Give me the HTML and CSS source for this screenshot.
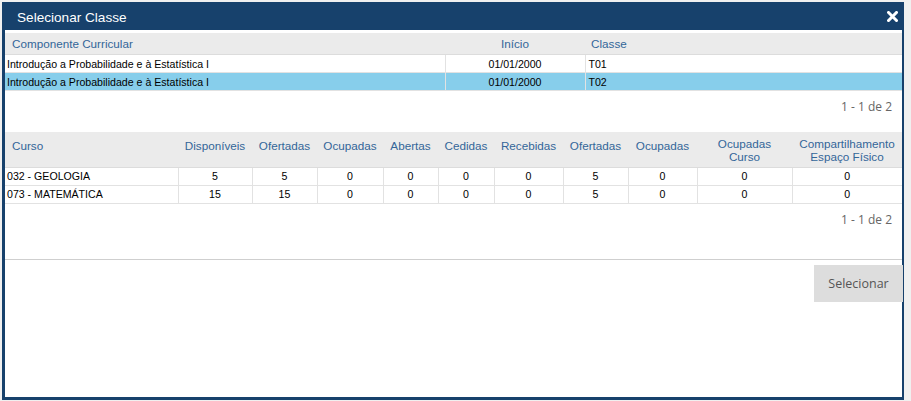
FILE: index.html
```html
<!DOCTYPE html>
<html lang="pt">
<head>
<meta charset="utf-8">
<title>Selecionar Classe</title>
<link rel="stylesheet" href="styles.css">
</head>
<body>
<div class="dialog">
  <div class="titlebar">
    <span class="title">Selecionar Classe</span>
    <span class="close" aria-label="Fechar">
      <svg width="11" height="11" viewBox="0 0 11 11"><path d="M1.5 1.5 L9.5 9.5 M9.5 1.5 L1.5 9.5" stroke="#fff" stroke-width="3" stroke-linecap="square"/></svg>
    </span>
  </div>
  <div class="content">
    <table class="grid grid-classes">
      <colgroup>
        <col class="c-comp"><col class="c-inicio"><col class="c-classe">
      </colgroup>
      <thead>
        <tr><th class="left">Componente Curricular</th><th>Início</th><th class="left">Classe</th></tr>
      </thead>
      <tbody>
        <tr><td class="left">Introdução a Probabilidade e à Estatística I</td><td>01/01/2000</td><td class="left t">T01</td></tr>
        <tr class="selected"><td class="left">Introdução a Probabilidade e à Estatística I</td><td>01/01/2000</td><td class="left t">T02</td></tr>
      </tbody>
    </table>
    <div class="pager">1 - 1 de 2</div>

    <table class="grid grid-cursos">
      <colgroup>
        <col class="k1"><col class="k2"><col class="k3"><col class="k4"><col class="k5"><col class="k6"><col class="k7"><col class="k8"><col class="k9"><col class="k10"><col class="k11">
      </colgroup>
      <thead>
        <tr>
          <th class="left">Curso</th><th>Disponíveis</th><th>Ofertadas</th><th>Ocupadas</th><th>Abertas</th><th>Cedidas</th><th>Recebidas</th><th>Ofertadas</th><th>Ocupadas</th><th>Ocupadas<br>Curso</th><th>Compartilhamento<br>Espaço Físico</th>
        </tr>
      </thead>
      <tbody>
        <tr><td class="left">032 - GEOLOGIA</td><td>5</td><td>5</td><td>0</td><td>0</td><td>0</td><td>0</td><td>5</td><td>0</td><td>0</td><td>0</td></tr>
        <tr><td class="left">073 - MATEMÁTICA</td><td>15</td><td>15</td><td>0</td><td>0</td><td>0</td><td>0</td><td>5</td><td>0</td><td>0</td><td>0</td></tr>
      </tbody>
    </table>
    <div class="pager">1 - 1 de 2</div>

    <div class="footer">
      <button class="btn">Selecionar</button>
    </div>
  </div>
</div>
</body>
</html>
```

FILE: styles.css
```css
html, body {
  margin: 0;
  padding: 0;
  background: #f0f0f0;
}
body {
  padding: 2px 0 0 2px;
  font-family: "Liberation Sans", Arial, sans-serif;
}
.dialog {
  width: 897px;
  height: 395px;
  border-left: 3px solid #17416c;
  border-right: 2px solid #17416c;
  border-bottom: 3px solid #17416c;
  background: #fff;
  display: flex;
  flex-direction: column;
}
.titlebar {
  height: 28px;
  margin: 0 -2px 0 -3px;
  background: #17416c;
  display: flex;
  align-items: center;
  justify-content: space-between;
  padding: 0 6px 0 15px;
}
.title {
  color: #fff;
  font-size: 13.6px;
  position: relative;
  top: 1px;
}
.close {
  display: flex;
  width: 11px;
  height: 11px;
}
.content {
  flex: 1;
  padding-top: 3px;
}
.grid {
  width: 897px;
  table-layout: fixed;
  border-collapse: collapse;
  font-size: 10.6px;
  color: #000;
}
.grid th {
  background: #ebebeb;
  color: #336699;
  font-weight: normal;
  font-size: 11.7px;
  text-align: center;
  padding: 0 2px;
  border-bottom: 1px solid #dcdcdc;
}
.grid th.left {
  text-align: left;
  padding-left: 7px;
}
.grid td {
  height: 17px;
  padding: 0 2px;
  text-align: center;
  border: 1px solid #e2e2e2;
  border-top: none;
  white-space: nowrap;
  overflow: hidden;
}
.grid td:first-child { border-left: none; }
.grid td:last-child { border-right: none; }
.grid td.left { text-align: left; }
.grid td.t { padding-left: 3px; }
.grid tr.selected td { background: #87ceeb; }

.grid-classes th { height: 21px; }
.c-comp { width: 440px; }
.c-inicio { width: 140px; }
.c-classe { width: 317px; }
.grid-classes th:last-child { padding-left: 6px; }

.grid-cursos th {
  height: 35px;
  vertical-align: top;
  padding-top: 5px;
  line-height: 13px;
  box-sizing: border-box;
}
.grid-cursos th:first-child { padding-top: 7px; }
.grid-cursos th:not(:nth-child(10)):not(:nth-child(11)) { padding-top: 7px; }
.k1 { width: 173px; }
.k2 { width: 74px; }
.k3 { width: 65px; }
.k4 { width: 66px; }
.k5 { width: 55px; }
.k6 { width: 56px; }
.k7 { width: 69px; }
.k8 { width: 65px; }
.k9 { width: 69px; }
.k10 { width: 95px; }
.k11 { width: 110px; }

.pager {
  font-family: "Open Sans", sans-serif;
  font-size: 12px;
  color: #666;
  text-align: right;
  line-height: 18px;
  padding: 7px 10px 16px 0;
}
.grid-cursos + .pager {
  padding-bottom: 30px;
}
.footer {
  border-top: 1px solid #cfcfcf;
  display: flex;
  justify-content: flex-end;
  padding-top: 5px;
}
.btn {
  width: 89px;
  height: 37px;
  margin-right: -1px;
  border: none;
  background: #dddddd;
  color: #555;
  font-family: "Open Sans", sans-serif;
  font-size: 12.5px;
  padding: 0;
}
```
